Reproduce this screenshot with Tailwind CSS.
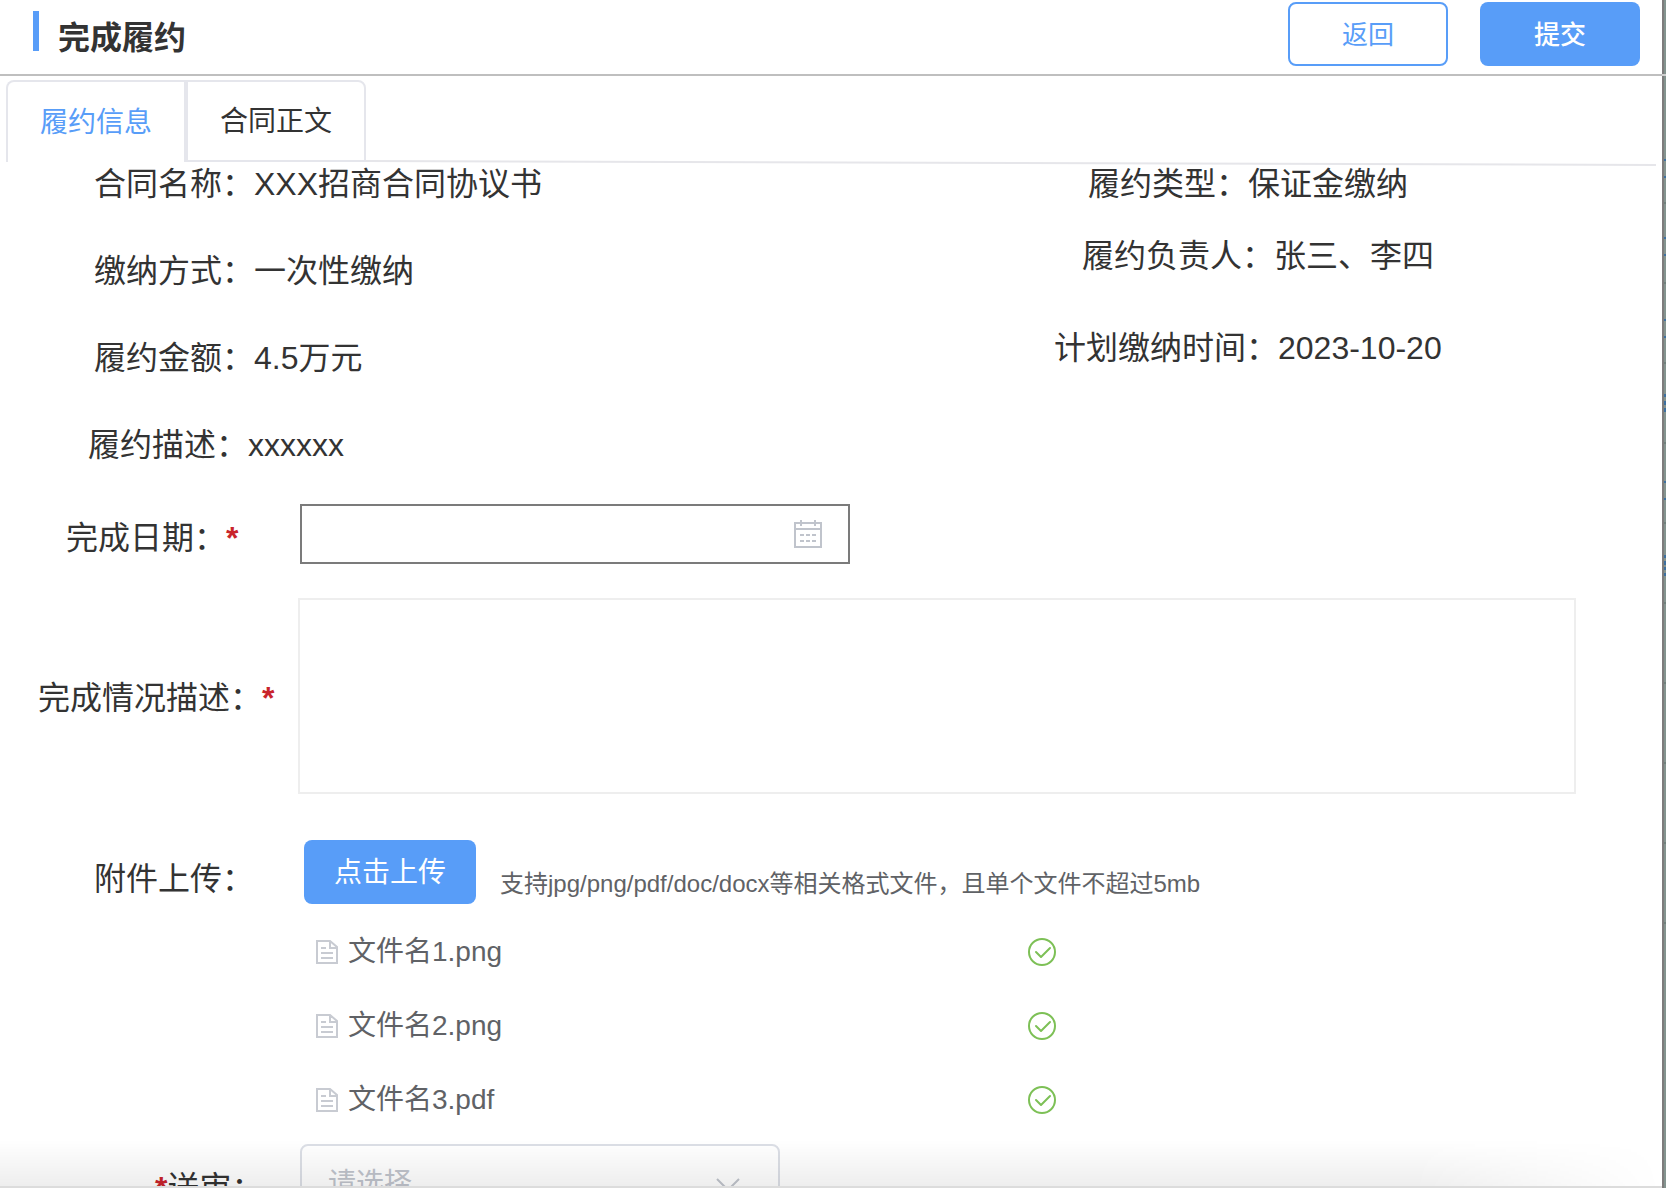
<!DOCTYPE html>
<html lang="zh-CN">
<head>
<meta charset="utf-8">
<meta name="viewport" content="width=device-width, initial-scale=1">
<title>完成履约</title>
<script src="https://cdn.jsdelivr.net/npm/@tailwindcss/browser@4"></script>
</head>
<body class="flex h-screen overflow-hidden bg-white font-['Liberation_Sans','Noto_Sans_CJK_SC',sans-serif] text-[32px] leading-[48px] text-[#333333]">
<svg class="hidden" aria-hidden="true">
  <symbol id="doc" viewBox="0 0 22 24"><path d="M1 1h13l7 6v16H1zM14 1v7h7M5 8h5M5 13h12M5 18h12" fill="none" stroke="#c8cbd2" stroke-width="2"/></symbol>
  <symbol id="ok" viewBox="0 0 28 28"><circle cx="14" cy="14" r="13" fill="none" stroke="#7dc056" stroke-width="2"/><path d="M8 14l5 5 9-9" fill="none" stroke="#7dc056" stroke-width="2" stroke-linecap="round" stroke-linejoin="round"/></symbol>
</svg>

<div class="relative flex min-w-0 flex-1 flex-col">
  <header class="flex h-[76px] shrink-0 items-start border-b-2 border-[#bfbfbf] pl-[33px] pr-[22px]">
    <span class="mt-[11px] h-10 w-[6px] bg-[#589df8]"></span>
    <h1 class="mt-[14px] ml-[19px] font-bold">完成履约</h1>
    <div class="mt-[2px] ml-auto flex gap-8 text-[26px]">
      <button type="button" class="h-16 w-40 rounded-lg border-2 border-[#589df8] bg-white pt-[2px] text-[#589df8]">返回</button>
      <button type="button" class="h-16 w-40 rounded-lg bg-[#589df8] pt-[2px] font-medium text-white">提交</button>
    </div>
  </header>

  <nav class="mt-1 flex h-[82px] shrink-0 items-start px-[6px] text-[28px]">
    <a href="#info" class="flex h-[82px] w-[180px] items-center justify-center rounded-tl-lg border-2 border-b-0 border-[#e5e6ec] pt-[2px] text-[#589df8]">履约信息</a>
    <a href="#text" class="flex h-[82px] w-[180px] items-center justify-center rounded-tr-lg border-2 border-[#e5e6ec] pt-[2px]">合同正文</a>
    <svg class="h-[86px] min-w-0 flex-1" viewBox="0 0 100 86" preserveAspectRatio="none" aria-hidden="true"><path d="M0 80L100 84V86L0 82z" fill="#e6e6ea"/></svg>
  </nav>

  <main id="info" class="flex flex-1 flex-col overflow-hidden pt-[2px]">
    <section class="flex shrink-0 leading-10">
      <dl class="flex w-[960px] flex-col gap-[47px] pl-[94px]">
        <div class="flex"><dt>合同名称：</dt><dd>XXX招商合同协议书</dd></div>
        <div class="flex"><dt>缴纳方式：</dt><dd>一次性缴纳</dd></div>
        <div class="flex"><dt>履约金额：</dt><dd>4.5万元</dd></div>
        <div class="-ml-[6px] flex"><dt>履约描述：</dt><dd>xxxxxx</dd></div>
      </dl>
      <dl class="flex flex-1 flex-col pl-[94px]">
        <div class="flex pl-[34px]"><dt>履约类型：</dt><dd>保证金缴纳</dd></div>
        <div class="mt-8 flex pl-7"><dt>履约负责人：</dt><dd>张三、李四</dd></div>
        <div class="mt-[52px] flex"><dt>计划缴纳时间：</dt><dd>2023-10-20</dd></div>
      </dl>
    </section>

    <form class="flex flex-col pt-[39px]">
      <div class="flex items-center">
        <label for="date" class="w-[300px] shrink-0 pt-2 pl-[66px]">完成日期：<span class="font-bold text-[#c9242b]">*</span></label>
        <div class="relative">
          <input id="date" type="text" class="block h-[60px] w-[550px] border-2 border-[#7b7b7b] bg-white pl-4 pr-16 text-[28px] outline-none">
          <svg class="absolute top-4 right-[28px] size-7" viewBox="0 0 28 28" fill="none" stroke="#c0c4cc" stroke-width="2" aria-hidden="true"><path d="M1 3h26v24H1zM1 9h26M7 0v6M21 0v6"/><path d="M6 15h16M6 21h16" stroke-dasharray="4 2"/></svg>
        </div>
      </div>
      <div class="mt-[34px] flex items-center pr-[86px]">
        <label for="desc" class="w-[298px] shrink-0 pt-1 pl-[38px]">完成情况描述：<span class="font-bold text-[#c9242b]">*</span></label>
        <textarea id="desc" class="block h-[196px] min-w-0 flex-1 resize-none border-2 border-[#eeeeee] bg-white p-3 text-[28px] outline-none"></textarea>
      </div>
      <div class="mt-[42px] flex items-center">
        <label for="upload" class="w-[304px] shrink-0 pt-[14px] pl-[94px]">附件上传：</label>
        <button id="upload" type="button" class="h-16 w-[172px] rounded-lg bg-[#589df8] pt-[2px] text-[28px] text-white">点击上传</button>
        <p class="mt-6 ml-6 text-[24px] text-[#606266]">支持jpg/png/pdf/doc/docx等相关格式文件，且单个文件不超过5mb</p>
      </div>
      <ul class="mt-5 flex w-[1056px] flex-col gap-[26px] pl-[316px] text-[28px] text-[#606266]">
        <li class="flex items-center"><svg class="h-6 w-[22px]" aria-hidden="true"><use href="#doc"/></svg><span class="ml-[10px]">文件名1.png</span><svg class="ml-auto size-7" aria-hidden="true"><use href="#ok"/></svg></li>
        <li class="flex items-center"><svg class="h-6 w-[22px]" aria-hidden="true"><use href="#doc"/></svg><span class="ml-[10px]">文件名2.png</span><svg class="ml-auto size-7" aria-hidden="true"><use href="#ok"/></svg></li>
        <li class="flex items-center"><svg class="h-6 w-[22px]" aria-hidden="true"><use href="#doc"/></svg><span class="ml-[10px]">文件名3.pdf</span><svg class="ml-auto size-7" aria-hidden="true"><use href="#ok"/></svg></li>
      </ul>
      <div class="mt-5 flex items-center">
        <label for="review" class="w-[300px] shrink-0 pt-2 pl-[155px]"><span class="font-bold text-[#c9242b]">*</span>送审：</label>
        <div class="relative">
          <select id="review" class="block h-20 w-[480px] appearance-none rounded-lg border-2 border-[#dcdfe6] bg-white px-[26px] text-[28px] text-[#c0c4cc] outline-none"><option>请选择</option></select>
          <svg class="pointer-events-none absolute top-[34px] right-[40px] h-[14px] w-6" viewBox="0 0 24 14" fill="none" stroke="#c0c4cc" stroke-width="2" aria-hidden="true"><path d="M1 1l11 11L23 1"/></svg>
        </div>
      </div>
    </form>
  </main>

  <div class="pointer-events-none absolute inset-x-0 bottom-0 h-12 bg-linear-to-b from-transparent to-black/7 mask-r-from-85%"></div>
  <div class="pointer-events-none absolute inset-x-0 bottom-0 h-[2px] bg-[#dcdcdc]"></div>
</div>

<aside class="relative w-1 shrink-0 border-l-2 border-[#7e7c7c] bg-[#84948f]" aria-hidden="true">
  <svg class="absolute inset-0 h-full w-[2px]" fill="#3d70a0"><path d="M0 159h2v2H0zM0 176h2v2H0zM0 237h2v2H0zM0 254h2v2H0zM0 319h2v2H0zM0 336h2v2H0zM0 394h2v3H0zM0 401h2v4H0zM0 408h2v4H0zM0 481h2v2H0zM0 498h2v2H0zM0 555h2v3H0zM0 561h2v4H0zM0 567h2v3H0zM0 573h2v3H0z"/><path fill="#70807c" d="M0 202h2v2H0zM0 282h2v2H0zM0 362h2v2H0zM0 442h2v2H0zM0 522h2v2H0zM0 602h2v2H0zM0 682h2v2H0zM0 762h2v2H0zM0 842h2v2H0zM0 922h2v2H0z"/></svg>
  <span class="absolute top-[74px] -left-[2px] h-[2px] w-1 bg-[#d0d0d0]"></span>
</aside>
</body>
</html>
